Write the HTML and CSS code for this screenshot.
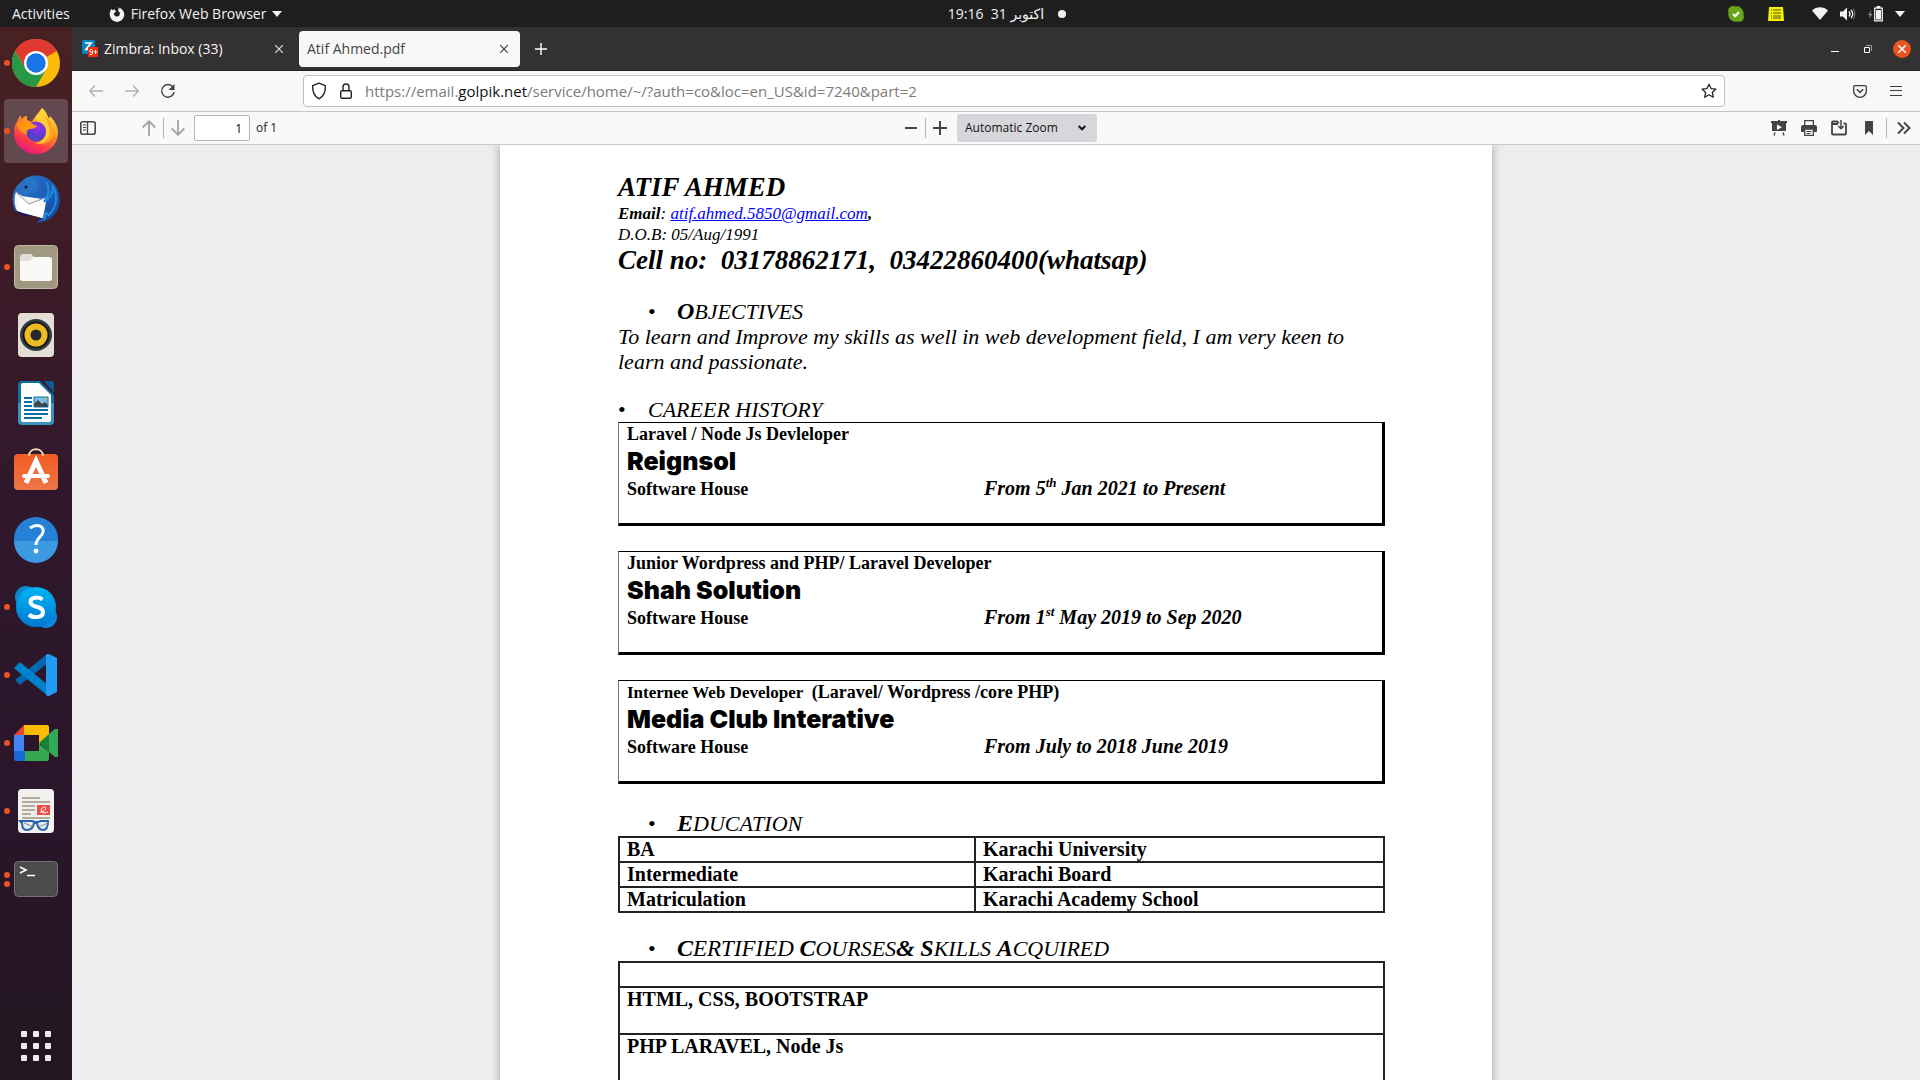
FILE: index.html
```html
<!DOCTYPE html>
<html lang="en">
<head>
<meta charset="utf-8">
<title>Atif Ahmed.pdf</title>
<link rel="stylesheet" href="styles.css">
</head>
<body>
<header class="topbar">
  <div class="topbar-left">
    <button class="top-btn">Activities</button>
    <button class="top-btn app-menu">
      <svg width="16" height="16" viewBox="0 0 16 16"><path d="M8.500 0.300c1 .9 1.300 1.800 1.400 2.700.5-.4.700-.8.900-1.200 2.500 1.300 4.500 3.500 4.500 6.800a7.300 7.300 0 0 1-14.600 0C.700 6.500 1.200 4.500 2.600 2.800l.6 1.500C4 3.400 5 3.300 5.900 3.500c-.2.8.4 1.500 1.500 1.700L5.600 6.700c-.8.6-.7 1.600-.3 2.300a3 3 0 0 0 5.600-1.500c0-1.300-.8-2-1.800-2.500.6-1.500.4-3.200-.6-4.700z" fill="#f2f2f2"/></svg>
      <span>Firefox Web Browser</span>
      <svg width="10" height="6" viewBox="0 0 10 6"><path d="M0 0h10L5 6z" fill="#f2f2f2"/></svg>
    </button>
  </div>
  <button class="top-btn clock"><span>19:16&nbsp; 31 اكتوبر</span><i class="notice"></i></button>
  <div class="topbar-right">
    <svg width="16" height="16" viewBox="0 0 16 16"><path d="M5 0c1 0 1.500.3 2 .4A7.300 7.300 0 0 1 15.500 9C17 13 13.500 17 9.500 15.500A7.300 7.300 0 0 1 .5 7C-.7 3.500 1.500 0 5 0z" fill="#68a51c"/><path d="M5 8l2.200 2.200L11 6" stroke="#fff" stroke-width="2" fill="none"/></svg>
    <svg class="notes" width="16" height="14" viewBox="0 0 16 14"><path d="M1 0h14l1 14H0z" fill="#f4f000"/><path d="M3 3h1m1 0h8M3 6h1m1 0h8M3 9h1m1 0h8M3 11h1m1 0h8" stroke="#565600"/></svg>
    <svg class="wifi" width="16" height="13" viewBox="0 0 16 13"><path d="M0 3.500C4.500-.8 11.500-.8 16 3.500L8 13z" fill="#f2f2f2"/></svg>
    <svg width="16" height="14" viewBox="0 0 16 14"><path d="M0 4.500h3L7 .5v13l-4-4H0z" fill="#f2f2f2"/><path d="M9 4.500q2 2.500 0 5M11 3q3.500 4 0 8" stroke="#f2f2f2" stroke-width="1.300" fill="none"/><path d="M13 1.500q4 5.500 0 11" stroke="#777" fill="none"/></svg>
    <svg width="15" height="16" viewBox="0 0 15 16"><path d="M3.500 4L0 9h2l-1 4 3.500-5h-2z" fill="#888"/><path d="M6.700 2.200h7.600v12.600H6.700z" fill="none" stroke="#f2f2f2" stroke-width="1.300"/><path d="M8.500 0h4v2h-4zM8 4h5v9.500H8z" fill="#f2f2f2"/></svg>
    <svg width="10" height="6" viewBox="0 0 10 6"><path d="M0 0h10L5 6z" fill="#f2f2f2"/></svg>
  </div>
</header>

<div class="desktop">
<nav class="dock" aria-label="Dock">
  <button class="dock-item" aria-label="Chrome"><i class="dots"><b></b></i>
    <svg width="48" height="48" viewBox="0 0 48 48"><circle cx="24" cy="24" r="24" fill="#fbbc09"/><path d="M24 24L3.200 12A24 24 0 0 1 44.800 12z" fill="#e03a30"/><path d="M24 12h20.800A24 24 0 0 0 3.200 12L13.600 30z" fill="#e03a30"/><path d="M3.200 12A24 24 0 0 0 24 48l10.400-18H13.600z" fill="#279847"/><circle cx="24" cy="24" r="12" fill="#fff"/><circle cx="24" cy="24" r="9.700" fill="#1a73e8"/></svg></button>
  <button class="dock-item active" aria-label="Firefox"><i class="dots"><b></b></i>
    <svg width="48" height="48" viewBox="0 0 48 48"><defs><linearGradient id="ff" x1=".8" y1="0" x2=".3" y2="1"><stop offset="0" stop-color="#fff44f"/><stop offset=".4" stop-color="#ff9a1f"/><stop offset=".75" stop-color="#ff3b47"/><stop offset="1" stop-color="#e31587"/></linearGradient><radialGradient id="fp" cx=".6" cy=".3"><stop offset="0" stop-color="#a32cf5"/><stop offset="1" stop-color="#533fc9"/></radialGradient></defs><path d="M30 1c5 4 6 9 7 12l1-4c5 5 8 11 8 17a22 21 0 0 1-44 0c0-5 1-9 4-13 0-2 2-4 3-5v4c2-1 3-3 6-3v4l5 2C22 10 26 7 30 1z" fill="url(#ff)"/><path d="M30 1c-3 7-9 8-4 14 8 2 10 8 7 15-3 5-8 6-11 6 12 3 20-4 20-13C42 13 33 9 30 1z" fill="#ffcf35"/><path d="M36 17c4 9 0 18-9 20 11 0 17-7 15-17-2-5-7-9-10-12 2 3 3 5 4 9z" fill="#ffa51e"/><circle cx="24" cy="24.500" r="10" fill="url(#fp)"/><path d="M5 16c5 0 8-2 12-1l8 4c-2 3-6 3-8 3-2 2-3 3-2 6-6-3-10-7-10-12z" fill="#ff980e"/></svg></button>
  <button class="dock-item" aria-label="Thunderbird">
    <svg width="48" height="48" viewBox="0 0 48 48"><defs><linearGradient id="tb" x1="0" y1="0" x2="1" y2="1"><stop offset="0" stop-color="#2f74c6"/><stop offset=".6" stop-color="#1c5db8"/><stop offset="1" stop-color="#1a3f91"/></linearGradient></defs><path d="M9 7C16-1 31-2 40 7c8 7 10 20 5 29-3 6-11 11-20 12 2-3 3-4 6-5L4 37C-2 26 0 14 9 7z" fill="url(#tb)"/><path d="M4 17l6 4 20 3 5-2-4 21L5 36C2 30 2 22 4 17z" fill="#f4f5f7"/><path d="M9 20l8 9 17-4-4 18L5 36z" fill="#fff"/><path d="M5 18l12 11 18-7" fill="none" stroke="#9498a0"/><path d="M3 35l14 6c-5 1-10-1-14-6z" fill="#211052"/><path d="M15 2c8 0 13 6 11 13-5 5-12 2-15 5-2-5 0-11 4-18z" fill="#2773c5"/><path d="M35 7c3 10 1 14-3 20 6-4 9-10 9-15 5 8 4 20-4 28l-3-2-2 7" fill="none" stroke="#1d8edf" stroke-width="2"/><circle cx="14" cy="12" r="1.500" fill="#09133d"/></svg></button>
  <button class="dock-item" aria-label="Files"><i class="dots"><b></b></i>
    <svg width="48" height="48" viewBox="0 0 48 48"><rect x="2.500" y="2.500" width="43" height="43" rx="4" fill="#a09881" stroke="#c1baa9"/><path d="M8 14q0-3 3-3h8l4 4v6H8z" fill="#e4e0d7"/><rect x="8" y="14" width="32" height="24" rx="3" fill="#f9f9f8"/><path d="M8 14h13v1l-3 3H8z" fill="#e4e0d7"/></svg></button>
  <button class="dock-item" aria-label="Rhythmbox">
    <svg width="48" height="48" viewBox="0 0 48 48"><rect x="6" y="2" width="36" height="44" rx="4" fill="#e4dfd4"/><circle cx="24" cy="24" r="16" fill="#343c43"/><circle cx="24" cy="24" r="13.500" fill="#16191b"/><circle cx="24" cy="24" r="11.500" fill="#eebc22"/><circle cx="24" cy="24" r="5.500" fill="#24282a"/></svg></button>
  <button class="dock-item" aria-label="LibreOffice Writer">
    <svg width="48" height="48" viewBox="0 0 48 48"><path d="M10 2h18l14 14v26q0 4-4 4H10q-4 0-4-4V6q0-4 4-4z" fill="#136ea5"/><path d="M6 24h36v18q0 4-4 4H10q-4 0-4-4z" fill="#3d91bd"/><path d="M11 4h16l12 12v25q0 2-2 2H11q-2 0-2-2V6q0-2 2-2z" fill="#fff"/><path d="M32 2h8q2 0 2 2v10z" fill="#0d5e90"/><path d="M12 19h8m-8 4h8m-8 4h8m-8 4h24m-24 4h24m-24 4h18" stroke="#0a6da8" stroke-width="2"/><path d="M22 18h14v10H22z" fill="#7ebde5"/><path d="M22 28v-3l4-4 4 4 3-2 3 3v2z" fill="#444"/><path d="M33 18h3v4z" fill="#f5c211"/><path d="M22 18h14v10H22z" fill="none" stroke="#0a6da8"/></svg></button>
  <button class="dock-item" aria-label="Software">
    <svg width="48" height="48" viewBox="0 0 48 48"><defs><linearGradient id="sw" x1="0" y1="0" x2="0" y2="1"><stop offset="0" stop-color="#f05c22"/><stop offset="1" stop-color="#ef7547"/></linearGradient></defs><rect x="2" y="7" width="44" height="36" rx="4" fill="url(#sw)"/><path d="M17 9c0-9 14-9 14 0" fill="none" stroke="#eed9af" stroke-width="2"/><path d="M14 36l10-22 10 22" fill="none" stroke="#fff" stroke-width="5"/><path d="M12 29h24" stroke="#fff" stroke-width="4" stroke-linecap="round"/></svg></button>
  <button class="dock-item" aria-label="Help">
    <svg width="48" height="48" viewBox="0 0 48 48"><circle cx="24" cy="24" r="22" fill="#2581d5"/><path d="M2 26a22 22 0 0 0 44 0z" fill="#3c9be0"/><path d="M18 13c7-5 14-2 13 4-1 5-7 6-7 13" fill="none" stroke="#fff" stroke-width="3"/><circle cx="24" cy="36" r="2.400" fill="#fff"/></svg></button>
  <button class="dock-item" aria-label="Skype"><i class="dots"><b></b></i>
    <svg width="48" height="48" viewBox="0 0 48 48"><defs><linearGradient id="sk" x1="0" y1="0" x2="0" y2="1"><stop offset="0" stop-color="#00b5f0"/><stop offset="1" stop-color="#0078d4"/></linearGradient></defs><circle cx="14" cy="14" r="11" fill="#0b87cf"/><circle cx="34" cy="34" r="11" fill="#0a86d8"/><circle cx="24" cy="24" r="20" fill="url(#sk)"/><path d="M30.500 16.500c-4-3-12-2.500-12 2.500 0 6 12.500 3.500 12.500 10 0 6-10 6.500-14 2.500" fill="none" stroke="#fff" stroke-width="4"/></svg></button>
  <button class="dock-item" aria-label="Visual Studio Code"><i class="dots"><b></b></i>
    <svg width="48" height="48" viewBox="0 0 48 48"><path d="M3 29l4 4q1 1 2 0L36 12V3q-1 0-2 1L3 29z" fill="#0069ad"/><path d="M3 16l4-4q1-1 2 0l27 22v11L3 18q-1-1 0-2z" fill="#0081cc"/><path d="M34 4q1-1 3-1l8 4v34l-8 4q-2 0-3-1z" fill="#229cf0"/></svg></button>
  <button class="dock-item" aria-label="Google Meet"><i class="dots"><b></b></i>
    <svg width="48" height="48" viewBox="0 0 48 48"><path d="M12 6v10H2z" fill="#ea4335"/><path d="M2 16h10v16H2z" fill="#4285f4"/><path d="M2 32h11v10H4q-2 0-2-2z" fill="#1967d2"/><path d="M12 6h23q2 0 2 2v9L27 26V16H12z" fill="#fbbc04"/><path d="M13 32h14v-7l10 8v7q0 2-2 2H13z" fill="#34a853"/><path d="M27 24l10-9v18z" fill="#188038"/><path d="M37 15l6-5h3v28h-3l-6-5z" fill="#34a853"/></svg></button>
  <button class="dock-item" aria-label="Document Viewer"><i class="dots"><b></b></i>
    <svg width="48" height="48" viewBox="0 0 48 48"><rect x="6" y="2" width="36" height="44" rx="4" fill="#f1f1f0"/><path d="M10 11h18M10 15h28M10 19h13M10 23h13M10 27h9M10 31h28" stroke="#b3ab9a" stroke-width="2"/><rect x="25" y="18" width="13" height="10" fill="#ef4d42"/><path d="M28 25c6 0 7-5 4-5s-4 6 0 6l4-1" stroke="#fff" fill="none"/><path d="M8 34h12l3 1h3l3-1h7q0 9-5 9-5 0-6-7h-3q-1 7-7 7-5 0-5-7z" fill="#e8edf3" stroke="#2763ad" stroke-width="2"/><path d="M12 36l10 4m4 0l10-4" stroke="#888"/></svg></button>
  <button class="dock-item" aria-label="Terminal"><i class="dots"><b></b><b></b></i>
    <svg width="48" height="48" viewBox="0 0 48 48"><rect x="2.500" y="6.500" width="43" height="35" rx="4" fill="#4b4b4b" stroke="#747474"/><path d="M8 12l6 3-6 3M15 20.500h8" fill="none" stroke="#fff" stroke-width="1.600"/></svg></button>
  <button class="dock-item apps" aria-label="Show applications">
    <svg width="48" height="48" viewBox="0 0 48 48"><g fill="#f0efee"><rect x="9" y="9" width="6" height="6" rx="1"/><rect x="21" y="9" width="6" height="6" rx="1"/><rect x="33" y="9" width="6" height="6" rx="1"/><rect x="9" y="21" width="6" height="6" rx="1"/><rect x="21" y="21" width="6" height="6" rx="1"/><rect x="33" y="21" width="6" height="6" rx="1"/><rect x="9" y="33" width="6" height="6" rx="1"/><rect x="21" y="33" width="6" height="6" rx="1"/><rect x="33" y="33" width="6" height="6" rx="1"/></g></svg></button>
</nav>

<div class="browser">
  <div class="tabstrip">
    <div class="tab">
      <svg width="16" height="17" viewBox="0 0 16 17"><rect width="13" height="14" rx="1" fill="#0a80c4"/><path d="M3 3h6L4 9.500h3" stroke="#fff" stroke-width="1.700" fill="none"/><rect x="6" y="7" width="10" height="10" rx="1" fill="#f4310e"/><path d="M10.500 11.500a1.400 1.400 0 1 1 0-1v3q-.5 1.500-2.500 1M13.500 10v4M12 12h3.500" stroke="#fff" fill="none"/></svg>
      <span>Zimbra: Inbox (33)</span>
      <button class="icon-btn" aria-label="Close tab"><svg width="8" height="8" viewBox="0 0 8 8"><path d="M0 0l8 8M8 0L0 8" stroke="#ddd" stroke-width="1.200"/></svg></button>
    </div>
    <div class="tab selected">
      <span>Atif Ahmed.pdf</span>
      <button class="icon-btn" aria-label="Close tab"><svg width="8" height="8" viewBox="0 0 8 8"><path d="M0 0l8 8M8 0L0 8" stroke="#444" stroke-width="1.200"/></svg></button>
    </div>
    <button class="icon-btn new-tab" aria-label="New tab"><svg width="12" height="12" viewBox="0 0 12 12"><path d="M6 0v12M0 6h12" stroke="#fff" stroke-width="1.400"/></svg></button>
    <div class="window-controls">
      <button class="icon-btn" aria-label="Minimize"><svg width="8" height="8" viewBox="0 0 8 8"><path d="M0 6.500h8" stroke="#fff"/></svg></button>
      <button class="icon-btn" aria-label="Restore"><svg width="8" height="8" viewBox="0 0 8 8"><path d="M.5 2.500h5v5h-5z" stroke="#fff" fill="none"/><path d="M2 .5h5.500V6" stroke="#999" fill="none"/></svg></button>
      <button class="icon-btn close" aria-label="Close"><svg width="8" height="8" viewBox="0 0 8 8"><path d="M0 0l8 8M8 0L0 8" stroke="#fff" stroke-width="1.500"/></svg></button>
    </div>
  </div>

  <div class="navbar">
    <div class="nav-left">
      <button class="icon-btn" aria-label="Back"><svg width="14" height="12" viewBox="0 0 14 12"><path d="M6 .5L.7 6 6 11.500M1 6h13" stroke="#b0b0b0" stroke-width="1.300" fill="none"/></svg></button>
      <button class="icon-btn" aria-label="Forward"><svg width="14" height="12" viewBox="0 0 14 12"><path d="M8 .5L13.300 6 8 11.500M0 6h13" stroke="#b0b0b0" stroke-width="1.300" fill="none"/></svg></button>
      <button class="icon-btn" aria-label="Reload"><svg width="16" height="16" viewBox="0 0 16 16"><path d="M13 4A6.300 6.300 0 1 0 14.200 9" stroke="#3c3c3c" stroke-width="1.400" fill="none"/><path d="M14.500 1v6H8.500z" fill="#3c3c3c"/></svg></button>
    </div>
    <div class="urlbar">
      <svg width="16" height="18" viewBox="0 0 16 18"><path d="M8 1.200l6.300 2.500C14.700 9 13 14 8 16.800 3 14 1.300 9 1.700 3.700z" fill="none" stroke="#222" stroke-width="1.400" stroke-linejoin="round"/></svg>
      <svg width="12" height="16" viewBox="0 0 12 16"><rect x=".7" y="7.700" width="10.600" height="7.600" rx="1.500" fill="none" stroke="#222" stroke-width="1.400"/><path d="M3 7.500V4a3 3 0 0 1 6 0v3.500" fill="none" stroke="#222" stroke-width="1.400"/></svg>
      <a class="url" href="#">https://email.<b>golpik.net</b>/service/home/~/?auth=co&amp;loc=en_US&amp;id=7240&amp;part=2</a>
      <button class="icon-btn" aria-label="Bookmark this page"><svg width="16" height="16" viewBox="0 0 16 16"><path d="M8 1.200l2 4.400 4.900.5-3.600 3.300 1 4.800L8 11.800l-4.300 2.400 1-4.800L1.100 6.100 6 5.600z" fill="none" stroke="#222" stroke-width="1.300" stroke-linejoin="round"/></svg></button>
    </div>
    <div class="nav-right">
      <button class="icon-btn" aria-label="Pocket"><svg width="14" height="13" viewBox="0 0 14 13"><path d="M2 .7h10q1.300 0 1.300 1.300v4a6.300 6.300 0 0 1-12.600 0V2Q.7.700 2 .7z" fill="none" stroke="#3c3c3c" stroke-width="1.300"/><path d="M3.800 4.200L7 7.400l3.200-3.200" fill="none" stroke="#3c3c3c" stroke-width="1.400"/></svg></button>
      <button class="icon-btn" aria-label="Menu"><svg width="12" height="10" viewBox="0 0 12 10"><path d="M0 .5h12M0 4.500h12M0 9.500h12" stroke="#3c3c3c"/></svg></button>
    </div>
  </div>

  <div class="pdfbar">
    <div class="pdf-left">
      <button class="icon-btn sidebar" aria-label="Toggle sidebar"><svg width="16" height="14" viewBox="0 0 16 14"><rect x=".8" y=".8" width="14.400" height="12.400" rx="2" fill="none" stroke="#444" stroke-width="1.600"/><path d="M7.500 1v12" stroke="#444" stroke-width="1.400"/><path d="M3 4h3M3 6.500h3M3 9h3" stroke="#444"/></svg></button>
      <button class="icon-btn" aria-label="Previous page"><svg width="14" height="16" viewBox="0 0 14 16"><path d="M7 16V1.500M.7 7.500L7 1.200l6.300 6.300" fill="none" stroke="#a2a2a3" stroke-width="1.800"/></svg></button>
      <i class="sep"></i>
      <button class="icon-btn" aria-label="Next page"><svg width="14" height="16" viewBox="0 0 14 16"><path d="M7 0v14.500M.7 8.500L7 14.800l6.300-6.300" fill="none" stroke="#a2a2a3" stroke-width="1.800"/></svg></button>
      <input class="page-number" aria-label="Page" value="1">
      <span>of 1</span>
    </div>
    <div class="pdf-middle">
      <button class="icon-btn" aria-label="Zoom out"><svg width="14" height="14" viewBox="0 0 14 14"><path d="M1 7h12" stroke="#444" stroke-width="2"/></svg></button>
      <i class="sep"></i>
      <button class="icon-btn" aria-label="Zoom in"><svg width="14" height="14" viewBox="0 0 14 14"><path d="M0 7h14M7 0v14" stroke="#444" stroke-width="2"/></svg></button>
      <div class="zoom-wrap">
        <select class="zoom" aria-label="Zoom"><option>Automatic Zoom</option></select>
        <svg class="chevron" width="8" height="6" viewBox="0 0 8 6"><path d="M.7 1L4 4.300 7.300 1" fill="none" stroke="#111" stroke-width="2"/></svg>
      </div>
    </div>
    <div class="pdf-right">
      <button class="icon-btn" aria-label="Presentation mode"><svg width="16" height="16" viewBox="0 0 16 16"><path d="M7 0h2v1h7v2h-1v8H1V3H0V1h7z" fill="#444"/><path d="M6 4.500l5 2.700-5 2.700z" fill="#fff"/><path d="M4 12.500L3 15.500M12 12.500l1 3" stroke="#444" stroke-width="1.400"/></svg></button>
      <button class="icon-btn" aria-label="Print"><svg width="16" height="16" viewBox="0 0 16 16"><path d="M3.700 5V.7h8.600V5" fill="none" stroke="#444" stroke-width="1.300"/><path d="M2 5h12q2 0 2 2v4q0 1-1 1H1q-1 0-1-1V7q0-2 2-2z" fill="#444"/><path d="M3.700 9h8.600v6.300H3.700z" fill="#f9f9fa" stroke="#444" stroke-width="1.300"/><path d="M5.500 11.500h5M5.500 13.500h4" stroke="#444"/></svg></button>
      <button class="icon-btn" aria-label="Download"><svg width="16" height="16" viewBox="0 0 16 16"><path d="M8 3L6 1.500H2Q1 1.500 1 2.500v11q0 1 1 1h12q1 0 1-1v-9q0-1-1-1h-1.500M1 4h6" fill="none" stroke="#444" stroke-width="1.800"/><path d="M10 0v8.500M7.300 6L10 8.700 12.700 6" fill="none" stroke="#444" stroke-width="1.500"/></svg></button>
      <button class="icon-btn" aria-label="Current view"><svg width="16" height="16" viewBox="0 0 16 16"><path d="M4 1h8v14l-4-4-4 4z" fill="#444"/></svg></button>
      <i class="sep"></i>
      <button class="icon-btn tools" aria-label="Tools"><svg width="14" height="14" viewBox="0 0 14 14"><path d="M1 1.500L6.500 7 1 12.500M7 1.500L12.500 7 7 12.500" fill="none" stroke="#444" stroke-width="2"/></svg></button>
    </div>
  </div>

  <main class="viewer">
    <article class="page">
      <h1 class="lead">ATIF AHMED</h1>
      <p class="small"><b>Email</b>: <a href="#">atif.ahmed.5850@gmail.com</a><b>,</b></p>
      <p class="small">D.O.B: 05/Aug/1991</p>
      <p class="lead">Cell no:&nbsp; 03178862171,&nbsp; 03422860400(whatsap)</p>

      <h2 class="section"><span class="bullet">•</span><span><b>O</b>BJECTIVES</span></h2>
      <p class="objective">To learn and Improve my skills as well in web development field, I am very keen to learn and passionate.</p>

      <h2 class="section outer"><span class="bullet">•</span><span>CAREER HISTORY</span></h2>
      <section class="job">
        <h3>Laravel / Node Js Devleloper</h3>
        <p class="company">Reignsol</p>
        <div class="detail"><span>Software House</span><em>From 5<sup>th</sup> Jan 2021 to Present</em></div>
      </section>
      <section class="job">
        <h3>Junior Wordpress and PHP/ Laravel Developer</h3>
        <p class="company">Shah Solution</p>
        <div class="detail"><span>Software House</span><em>From 1<sup>st</sup> May 2019 to Sep 2020</em></div>
      </section>
      <section class="job">
        <h3><span class="role">Internee Web Developer&nbsp; </span>(Laravel/ Wordpress /core PHP)</h3>
        <p class="company">Media Club Interative</p>
        <div class="detail"><span>Software House</span><em>From July to 2018 June 2019</em></div>
      </section>

      <h2 class="section"><span class="bullet">•</span><span><b>E</b>DUCATION</span></h2>
      <table class="grid">
        <tr><td class="first">BA</td><td>Karachi University</td></tr>
        <tr><td>Intermediate</td><td>Karachi Board</td></tr>
        <tr><td>Matriculation</td><td>Karachi Academy School</td></tr>
      </table>

      <h2 class="section"><span class="bullet">•</span><span><b>C</b><span class="tall">ERTIFIED</span> <b>C</b>OURSES<b>&amp;</b> <b>S</b>KILLS <b>A</b>CQUIRED</span></h2>
      <table class="grid skills">
        <tr class="blank"><td></td></tr>
        <tr><td>HTML, CSS, BOOTSTRAP</td></tr>
        <tr><td>PHP LARAVEL, Node Js</td></tr>
      </table>
    </article>
  </main>
</div>
</div>
</body>
</html>
```
FILE: styles.css
```css
* { box-sizing: border-box; }
body {
  margin: 0;
  height: 100vh;
  display: flex;
  flex-direction: column;
  overflow: hidden;
  font: 14px/20px "Open Sans", "Noto Sans", "DejaVu Sans", sans-serif;
  color: #222;
}
h1, h2, h3, p { margin: 0; font-weight: normal; }
button { border: 0; padding: 0; background: none; font: inherit; color: inherit; }
svg { display: block; flex: none; }
i.sep { width: 1px; height: 20px; background: #b2b2b3; flex: none; }
.icon-btn { display: flex; align-items: center; justify-content: center; width: 16px; height: 16px; flex: none; }

/* Desktop top bar */
.topbar {
  display: grid;
  grid-template-columns: 1fr auto 1fr;
  align-items: center;
  height: 27px;
  flex: none;
  background: #1e1e1e;
  color: #f2f2f2;
}
.topbar-left { display: flex; gap: 39px; padding-left: 12px; }
.top-btn { display: flex; align-items: center; }
.app-menu { gap: 6px; }
.clock { gap: 14px; padding-left: 94px; }
.notice { width: 8px; height: 8px; border-radius: 50%; background: #f2f2f2; }
.topbar-right { display: flex; align-items: center; justify-content: flex-end; gap: 12px; padding-right: 15px; }
.notes { margin: 0 16px 0 12px; }

/* Dock */
.desktop { flex: 1; display: flex; min-height: 0; }
.dock {
  width: 72px;
  flex: none;
  display: flex;
  flex-direction: column;
  gap: 4px;
  padding: 4px 4px 2px;
  background: linear-gradient(#482122, #3c1b28 25%, #2f182c 45%, #2a152a 75%, #231620);
}
.dock-item { position: relative; display: flex; align-items: center; justify-content: center; height: 64px; flex: none; border-radius: 4px; }
.dock-item.active { background: #634850; }
.dots { position: absolute; left: 0; top: 0; height: 100%; display: flex; flex-direction: column; gap: 3px; justify-content: center; }
.dots b { width: 6px; height: 6px; border-radius: 50%; background: #e95420; }
.apps { margin-top: auto; }

/* Browser chrome */
.browser { flex: 1; min-width: 0; display: flex; flex-direction: column; }
.tabstrip {
  display: flex;
  align-items: center;
  height: 44px;
  flex: none;
  padding: 0 9px 0 2px;
  background: #333132;
  border-bottom: 1px solid #201e1f;
  color: #f5f5f5;
}
.tab { display: flex; align-items: center; gap: 6px; width: 221px; height: 36px; padding: 0 8px; margin-right: 4px; border-radius: 4px; }
.tab span { flex: 1; }
.tab.selected { background: #f8f8f8; color: #444; }
.new-tab { margin-left: 9px; }
.window-controls { margin-left: auto; display: flex; align-items: center; gap: 17px; }
.window-controls .close { width: 18px; height: 18px; border-radius: 50%; background: #e95420; }

.navbar {
  display: flex;
  align-items: center;
  height: 41px;
  flex: none;
  padding: 0 16px;
  background: #f8f8f8;
  border-bottom: 1px solid #c4c4c4;
}
.nav-left { display: flex; gap: 20px; width: 215px; }
.urlbar {
  flex: 1;
  display: flex;
  align-items: center;
  gap: 13px;
  height: 32px;
  padding: 0 7px;
  border: 1px solid #bfbfc0;
  border-radius: 4px;
  background: #fff;
}
.url { flex: 1; color: #7c7c7c; text-decoration: none; font-size: 15px; }
.url b { font-weight: normal; color: #111; }
.nav-right { display: flex; gap: 20px; justify-content: flex-end; width: 179px; }

.pdfbar {
  display: grid;
  grid-template-columns: 1fr auto 1fr;
  align-items: center;
  height: 33px;
  flex: none;
  background: #f9f9fa;
  border-bottom: 1px solid #c8c8c8;
  font-size: 12px;
}
.pdf-left { display: flex; align-items: center; gap: 6px; padding-left: 8px; }
.sidebar { margin-right: 39px; }
.page-number { width: 56px; height: 26px; margin-left: 2px; padding: 0 7px; border: 1px solid #b8b8b9; border-radius: 2px; font: inherit; text-align: right; background: #fff; }
.pdf-middle { display: flex; align-items: center; gap: 6px; padding-left: 8px; }
.zoom-wrap { position: relative; margin-left: 3px; }
.zoom { width: 140px; height: 28px; padding: 0 8px; border: 0; border-radius: 2px; background: #d7d7db; font: inherit; color: #111; appearance: none; display: block; }
.chevron { position: absolute; right: 11px; top: 11px; }
.pdf-right { display: flex; align-items: center; justify-content: flex-end; gap: 14px; padding-right: 8px; }
.pdf-right .sep { margin: 0 -5px; }

/* Document */
.viewer { flex: 1; min-height: 0; overflow: hidden; background: #ededf0; }
.page {
  max-width: 992px;
  margin: 0 auto;
  min-height: 100%;
  padding: 27px 107px 40px 118px;
  background: #fff;
  box-shadow: 0 0 9px rgba(0, 0, 0, .35);
  font-family: "Liberation Serif", "Times New Roman", serif;
  color: #000;
}
.lead { font-size: 27px; line-height: 31px; font-weight: bold; font-style: italic; }
.small { font-size: 17px; line-height: 21px; font-style: italic; }
.small a { color: #00f; }
.section { display: flex; margin-top: 23px; padding-left: 30px; font-size: 22px; line-height: 25px; font-style: italic; }
.section.outer { padding-left: 0; }
.section .bullet { width: 29px; flex: none; font-style: normal; }
.section.outer .bullet { width: 30px; }
.section b { font-size: 24px; line-height: 24px; }
.section .tall { font-size: 23px; line-height: 24px; }
.objective { font-size: 22px; line-height: 25px; font-style: italic; }

.job { border: 1px solid #000; border-left-color: #777; border-right-width: 3px; border-bottom-width: 3px; padding: 0 8px 23px; margin-bottom: 25px; font-weight: bold; }
.job + .section { margin-top: 27px; }
.job h3 { font-size: 18px; line-height: 22px; font-weight: bold; }
.job .role { font-size: 17px; line-height: 17px; }
.company { font: 900 25px/32px Inter, "Liberation Sans", sans-serif; }
.detail { display: grid; grid-template-columns: 357px 1fr; align-items: baseline; font-size: 18px; line-height: 22px; }
.detail em { font-size: 20px; }
.detail sup { font-size: 13px; line-height: 0; }

.grid { width: 100%; border-collapse: collapse; font-size: 20px; line-height: 23px; font-weight: bold; }
.grid td { border: 2px solid #222; padding: 0 7px; }
.grid .first { width: 356px; }
.skills td { height: 47px; vertical-align: top; }
.skills .blank td { height: 25px; }
```
